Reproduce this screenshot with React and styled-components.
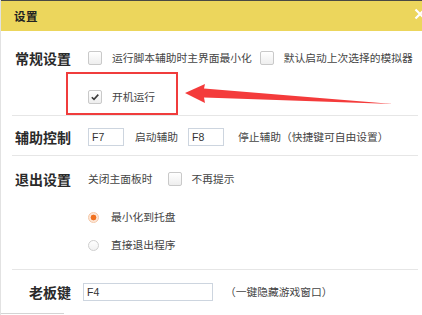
import React from "react";
import styled, { createGlobalStyle } from "styled-components";

const GlobalStyle = createGlobalStyle`
  html, body {
    margin: 0;
    padding: 0;
    background: #ffffff;
  }
  body {
    font-family: "Noto Sans CJK SC", "Noto Sans", sans-serif;
    color: #444;
  }
`;

const Window = styled.div`
  position: relative;
  width: 422px;
  height: 315px;
  overflow: hidden;
  background: #fff;
  border-left: 1px solid #e2e2e2;
  box-sizing: border-box;
`;

const TitleBar = styled.div`
  height: 30px;
  border-top: 1px solid #4a4a44;
  background: #ecd65c;
  display: flex;
  align-items: center;
  justify-content: space-between;
  padding-left: 13px;
`;

const Title = styled.div`
  font-size: 11.5px;
  font-weight: 700;
  color: #222;
  letter-spacing: 0.5px;
`;

const Close = styled.svg`
  align-self: flex-start;
  margin-top: 7px;
  margin-right: -4px;
`;

const Body = styled.div`
  padding: 0 4px 0 11px;
`;

const Section = styled.div`
  display: grid;
  grid-template-columns: 59px 1fr;
  column-gap: 17px;
  padding-top: ${(p) => p.$top}px;
  padding-bottom: ${(p) => p.$bottom}px;
  border-bottom: ${(p) => (p.$last ? "none" : "1px solid #e6e6e6")};
`;

const Label = styled.div`
  height: 22px;
  line-height: 22px;
  font-size: 14px;
  font-weight: 700;
  color: #2a2a2a;
  text-align: right;
  white-space: nowrap;
`;

const Rows = styled.div`
  display: flex;
  flex-direction: column;
  gap: ${(p) => p.$gap || 0}px;
`;

const Row = styled.div`
  height: 22px;
  display: flex;
  align-items: center;
  gap: ${(p) => p.$gap ?? 10}px;
  white-space: nowrap;
`;

const Text = styled.span`
  font-size: 10.75px;
  line-height: 14px;
  color: #444;
  margin-left: ${(p) => p.$ml || 0}px;
`;

const Box = styled.span`
  width: 14px;
  height: 14px;
  box-sizing: border-box;
  border: 1px solid #c9c9c9;
  border-radius: 2px;
  background: linear-gradient(#ffffff, #eeeeee);
  display: inline-flex;
  align-items: center;
  justify-content: center;
  flex: none;
  margin-left: ${(p) => p.$ml || 0}px;
`;

const Radio = styled.span`
  width: 11px;
  height: 11px;
  box-sizing: border-box;
  border-radius: 50%;
  border: 1px solid ${(p) => (p.$on ? "#f5c7a6" : "#cfcfcf")};
  background: ${(p) =>
    p.$on
      ? "radial-gradient(circle, #f0701e 0 2.6px, #fde7d8 3.2px)"
      : "linear-gradient(#fff, #f2f2f2)"};
  flex: none;
  margin-right: 2px;
`;

const KeyInput = styled.input`
  width: ${(p) => p.$w}px;
  height: 18px;
  box-sizing: border-box;
  border: 1px solid #cdd5df;
  padding: 0 3px;
  font-family: "Liberation Sans", Arial, sans-serif;
  font-size: 10.5px;
  color: #333;
  background: #fff;
  outline: none;
  flex: none;
`;

const Footer = styled.div`
  width: 63px;
  margin-top: 10px;
  margin-left: -11px;
  border-top: 1px solid #d4d4d4;
`;

const Frame = styled.div`
  position: absolute;
  left: 65px;
  top: 72px;
  width: 112px;
  height: 43px;
  box-sizing: border-box;
  border: 2px solid #f03c3c;
  pointer-events: none;
`;

const Overlay = styled.svg`
  position: absolute;
  left: 0;
  top: 0;
  pointer-events: none;
`;

function Check({ on, ml }) {
  return (
    <Box $ml={ml}>
      {on && (
        <svg width="10" height="10" viewBox="0 0 10 10">
          <path d="M1.8 5.2 L4 7.4 L8.3 2.6" fill="none" stroke="#3a3a3a" strokeWidth="1.6" />
        </svg>
      )}
    </Box>
  );
}

export default function App() {
  return (
    <>
      <GlobalStyle />
      <Window>
        <TitleBar>
          <Title>设置</Title>
          <Close width="12" height="12" viewBox="0 0 12 12">
            <path d="M1.5 1.5 L10.5 10.5 M10.5 1.5 L1.5 10.5" stroke="#fff" strokeWidth="2.2" />
          </Close>
        </TitleBar>
        <Body>
          <Section $top={16} $bottom={7}>
            <Label>常规设置</Label>
            <Rows $gap={17}>
              <Row>
                <Check />
                <Text>运行脚本辅助时主界面最小化</Text>
                <Check ml={-2} />
                <Text>默认启动上次选择的模拟器</Text>
              </Row>
              <Row>
                <Check on />
                <Text>开机运行</Text>
              </Row>
            </Rows>
          </Section>

          <Section $top={10} $bottom={7}>
            <Label>辅助控制</Label>
            <Row $gap={0}>
              <KeyInput $w={36} value="F7" readOnly />
              <Text $ml={11}>启动辅助</Text>
              <KeyInput $w={36} value="F8" readOnly style={{ marginLeft: 10 }} />
              <Text $ml={14}>停止辅助</Text>
              <Text $ml={0}>（快捷键可自由设置）</Text>
            </Row>
          </Section>

          <Section $top={12} $bottom={13}>
            <Label>退出设置</Label>
            <Rows>
              <Row>
                <Text>关闭主面板时</Text>
                <Check ml={5} />
                <Text>不再提示</Text>
              </Row>
              <Rows $gap={6} style={{ marginTop: 16 }}>
                <Row>
                  <Radio $on />
                  <Text>最小化到托盘</Text>
                </Row>
                <Row>
                  <Radio />
                  <Text>直接退出程序</Text>
                </Row>
              </Rows>
            </Rows>
          </Section>

          <Section $top={11} $bottom={0} $last>
            <Label>老板键</Label>
            <Row $gap={12}>
              <KeyInput $w={130} value="F4" readOnly style={{ marginLeft: -5 }} />
              <Text>（一键隐藏游戏窗口）</Text>
            </Row>
          </Section>
          <Footer />
        </Body>

        <Frame />
        <Overlay width="422" height="315" viewBox="0 0 422 315">
          <polygon
            points="184,93 204,84 203,88.5 392,104 203,97.5 204,103"
            fill="#f43b3b"
          />
        </Overlay>
      </Window>
    </>
  );
}
